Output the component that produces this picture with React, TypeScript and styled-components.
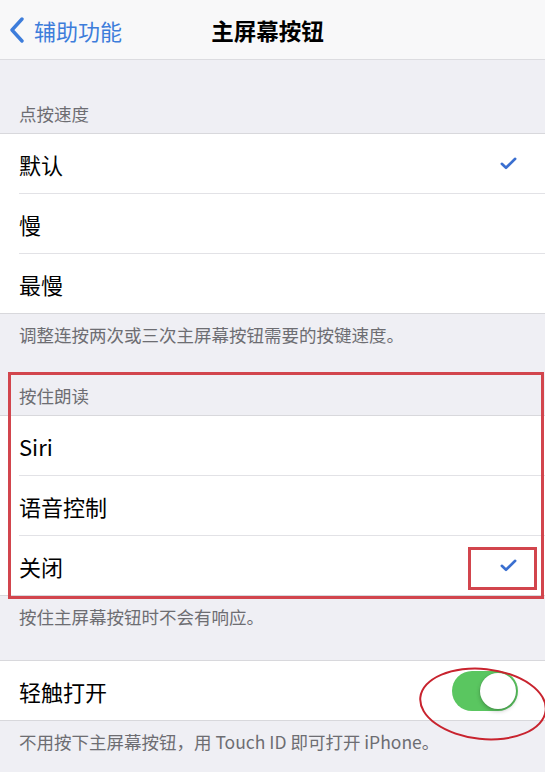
import styled, { createGlobalStyle } from 'styled-components'

const GlobalStyle = createGlobalStyle`
  html, body {
    margin: 0;
    padding: 0;
    background: #efeff4;
  }
  body {
    font-family: 'Noto Sans CJK SC', 'Noto Sans', sans-serif;
    -webkit-font-smoothing: antialiased;
  }
`

type Option = { label: string; checked?: boolean; marked?: boolean }

const speedOptions: Option[] = [{ label: '默认', checked: true }, { label: '慢' }, { label: '最慢' }]

const holdOptions: Option[] = [{ label: 'Siri' }, { label: '语音控制' }, { label: '关闭', checked: true, marked: true }]

function CheckIcon() {
  return (
    <svg width="17" height="13" viewBox="0 0 17 13">
      <path d="M1.8 6.8 L6 10.8 L15.2 1.8" fill="none" stroke="#3a6fd0" strokeWidth="2.6" strokeLinecap="round" strokeLinejoin="round" />
    </svg>
  )
}

function BackChevron() {
  return (
    <svg width="16" height="26" viewBox="0 0 16 26">
      <path d="M13 2 L3 13 L13 24" fill="none" stroke="#3d7ddb" strokeWidth="3.4" strokeLinecap="round" strokeLinejoin="round" />
    </svg>
  )
}

export default function App() {
  return (
    <Page>
      <GlobalStyle />
      <NavBar>
        <Back>
          <BackChevron />
          <span>辅助功能</span>
        </Back>
        <Title>主屏幕按钮</Title>
        <div />
      </NavBar>

      <Header $height={73}>点按速度</Header>
      <Group>
        {speedOptions.map((o) => (
          <Row key={o.label}>
            <Label>{o.label}</Label>
            {o.checked && <CheckIcon />}
          </Row>
        ))}
      </Group>
      <Footer $height={60}>调整连按两次或三次主屏幕按钮需要的按键速度。</Footer>

      <Highlight>
        <Header $height={41}>按住朗读</Header>
        <Group>
          {holdOptions.map((o) => (
            <Row key={o.label}>
              <Label>{o.label}</Label>
              {o.checked && (
                <CheckWrap $marked={o.marked}>
                  <CheckIcon />
                </CheckWrap>
              )}
            </Row>
          ))}
        </Group>
      </Highlight>
      <Footer $height={64}>按住主屏幕按钮时不会有响应。</Footer>

      <Group>
        <Row>
          <Label>轻触打开</Label>
          <ToggleWrap>
            <Toggle $on>
              <Knob />
            </Toggle>
          </ToggleWrap>
        </Row>
      </Group>
      <Footer $height={52}>不用按下主屏幕按钮，用 Touch ID 即可打开 iPhone。</Footer>
    </Page>
  )
}

const Page = styled.div`
  width: 545px;
  min-height: 772px;
  background: #efeff4;
  overflow: hidden;
`

const NavBar = styled.header`
  height: 59px;
  display: grid;
  grid-template-columns: 1fr auto 1fr;
  align-items: center;
  background: #f8f8f9;
  border-bottom: 1px solid #dcdce0;
`

const Back = styled.div`
  display: flex;
  align-items: center;
  gap: 9px;
  padding-left: 9px;
  color: #3d7ddb;
  font-size: 22px;
  span {
    line-height: 1;
  }
`

const Title = styled.div`
  font-size: 22.5px;
  font-weight: 700;
  color: #000;
  padding-right: 10px;
`

const Header = styled.div<{ $height: number }>`
  height: ${(p) => p.$height}px;
  box-sizing: border-box;
  display: flex;
  align-items: flex-end;
  padding: 0 19px 8px;
  font-size: 17.5px;
  line-height: 22px;
  color: #6d6d72;
`

const Group = styled.section`
  background: #fff;
  border-top: 1px solid #d8d8dc;
  border-bottom: 1px solid #d8d8dc;
`

const Row = styled.div`
  height: 60px;
  margin-left: 19px;
  padding-right: 28px;
  display: flex;
  align-items: center;
  justify-content: space-between;
  border-bottom: 1px solid #e2e2e6;
  box-sizing: border-box;
  &:last-child {
    border-bottom: none;
    height: 59px;
  }
`

const Label = styled.span`
  font-size: 22px;
  color: #000;
  line-height: 1;
`

const Footer = styled.div<{ $height: number }>`
  height: ${(p) => p.$height}px;
  box-sizing: border-box;
  padding: 10px 19px 0;
  font-size: 17.5px;
  line-height: 22px;
  color: #6d6d72;
`

const Highlight = styled.div`
  position: relative;
  &::after {
    content: '';
    position: absolute;
    left: 8px;
    right: 1px;
    top: -2px;
    bottom: -3px;
    border: 3px solid #d2454d;
    pointer-events: none;
  }
`

const CheckWrap = styled.span<{ $marked?: boolean }>`
  position: relative;
  display: flex;
  &::after {
    content: '';
    display: ${(p) => (p.$marked ? 'block' : 'none')};
    position: absolute;
    left: -32px;
    top: -12px;
    width: 63px;
    height: 37px;
    border: 3px solid #d2454d;
  }
`

const ToggleWrap = styled.span`
  position: relative;
  display: flex;
  margin-right: -1px;
  &::after {
    content: '';
    position: absolute;
    left: -33px;
    top: -3px;
    width: 124px;
    height: 68px;
    border: 2px solid #c8232e;
    border-radius: 50%;
    transform: rotate(6deg);
    pointer-events: none;
  }
`

const Toggle = styled.span<{ $on?: boolean }>`
  width: 66px;
  height: 40px;
  border-radius: 20px;
  background: ${(p) => (p.$on ? '#5ac660' : '#e5e5ea')};
  display: flex;
  align-items: center;
  justify-content: ${(p) => (p.$on ? 'flex-end' : 'flex-start')};
  padding: 2px;
  box-sizing: border-box;
`

const Knob = styled.span`
  width: 36px;
  height: 36px;
  border-radius: 50%;
  background: #fff;
  box-shadow: 0 2px 4px rgba(0, 0, 0, 0.25), 0 0 0 0.5px rgba(0, 0, 0, 0.1);
`
